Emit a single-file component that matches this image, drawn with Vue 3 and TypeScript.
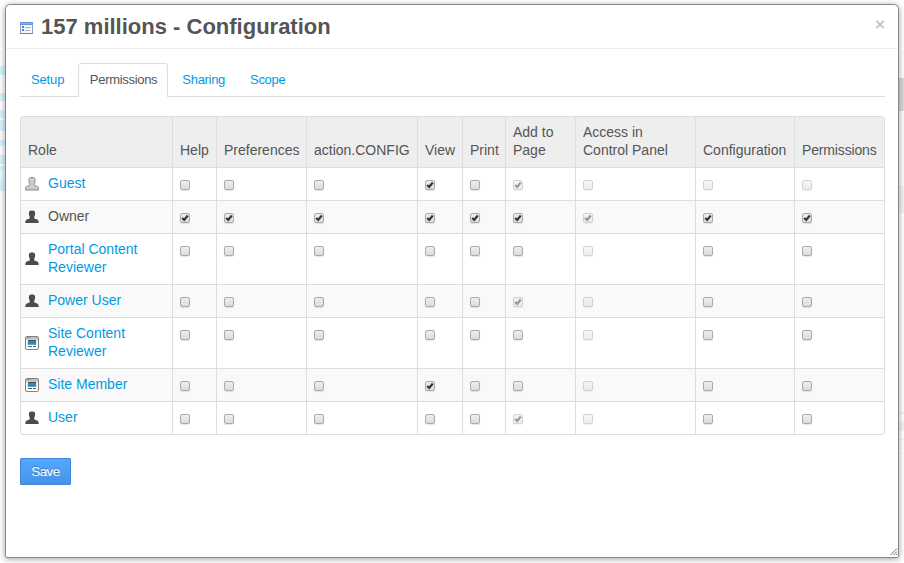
<script setup lang="ts">
import { ref } from 'vue'

type Icon = 'guest' | 'user' | 'site'
interface Role {
  name: string
  icon: Icon
  link: boolean
  // one mark per action: '-' off, 'x' on, 'd' disabled off, 'D' disabled on
  marks: string
}
interface Column {
  label: string
  width: number
}

const tabs = ['Setup', 'Permissions', 'Sharing', 'Scope']
const activeTab = ref('Permissions')

const columns: Column[] = [
  { label: 'Role', width: 152 },
  { label: 'Help', width: 44 },
  { label: 'Preferences', width: 90 },
  { label: 'action.CONFIG', width: 111 },
  { label: 'View', width: 45 },
  { label: 'Print', width: 43 },
  { label: 'Add to Page', width: 70 },
  { label: 'Access in Control Panel', width: 120 },
  { label: 'Configuration', width: 99 },
  { label: 'Permissions', width: 90 },
]

const roles = ref<Role[]>([
  { name: 'Guest', icon: 'guest', link: true, marks: '---x-Dddd' },
  { name: 'Owner', icon: 'user', link: false, marks: 'xxxxxxDxx' },
  { name: 'Portal Content Reviewer', icon: 'user', link: true, marks: '------d--' },
  { name: 'Power User', icon: 'user', link: true, marks: '-----Dd--' },
  { name: 'Site Content Reviewer', icon: 'site', link: true, marks: '------d--' },
  { name: 'Site Member', icon: 'site', link: true, marks: '---x--d--' },
  { name: 'User', icon: 'user', link: true, marks: '-----Dd--' },
])

const isOn = (m: string) => m === 'x' || m === 'D'
const isDisabled = (m: string) => m === 'd' || m === 'D'

function toggle(role: Role, i: number) {
  const m = role.marks[i]
  if (isDisabled(m)) return
  role.marks = role.marks.slice(0, i) + (m === 'x' ? '-' : 'x') + role.marks.slice(i + 1)
}
</script>

<template>
  <div class="page">
    <div class="backdrop left"></div>
    <div class="backdrop right"></div>
    <section class="dialog" role="dialog">
      <header class="head">
        <svg class="title-icon" width="13" height="12" viewBox="0 0 13 12">
          <rect x=".5" y=".5" width="12" height="11" fill="#f4f8fd" stroke="#86a3d4" />
          <rect x="0" y="0" width="13" height="3" fill="#6d93d2" />
          <rect x="1" y="1" width="11" height="1" fill="#8db1e6" />
          <path d="M2 4h2v2H2zM2 7h2v2H2z" fill="#5580c6" />
          <path d="M5 5.5h6M5 8.5h5" stroke="#b0b6bf" />
          <path d="M0 11.5h13" stroke="#6285c5" />
        </svg>
        <h1>157 millions - Configuration</h1>
        <button class="close" aria-label="Close">×</button>
      </header>
      <div class="body">
        <nav class="tabs">
          <a
            v-for="t in tabs"
            :key="t"
            class="tab"
            :class="{ active: t === activeTab }"
            @click="activeTab = t"
          >{{ t }}</a>
        </nav>
        <table class="grid">
          <colgroup>
            <col v-for="c in columns" :key="c.label" :style="{ width: c.width + 'px' }" />
          </colgroup>
          <thead>
            <tr>
              <th v-for="c in columns" :key="c.label">{{ c.label }}</th>
            </tr>
          </thead>
          <tbody>
            <tr v-for="r in roles" :key="r.name">
              <td class="role">
                <div class="role-inner">
                  <svg v-if="r.icon === 'site'" class="role-icon" width="14" height="14" viewBox="0 0 14 14">
                    <rect x=".5" y=".5" width="13" height="13" rx="1.5" fill="#fff" stroke="#85817f" />
                    <path d="M1 1h12v2H1z" fill="#c3c1bd" />
                    <path d="M2 1h2v1H2z" fill="#df7040" />
                    <path d="M4 1h2v1H4z" fill="#8faf62" />
                    <path d="M1 3.5h12" stroke="#ccc" />
                    <path d="M2 4h10v5H2z" fill="#dbe7ee" />
                    <path d="M3 4h8v5H3z" fill="#3f83af" />
                    <path d="M3 4.5h8" stroke="#28597c" />
                    <path d="M3 8.5h8" stroke="#5f9cc4" />
                    <path d="M3 10.5h4M8 10.5h3" stroke="#49616f" />
                  </svg>
                  <svg v-else class="role-icon" :class="r.icon" width="14" height="14" viewBox="0 0 14 14">
                    <path
                      d="M4.3 1.3C5 .2 9 .2 9.7 1.3c.6 1.1.5 2.9.2 3.8-.2 1-.7 1.6-.7 2.4 0 .9.4 1.2 1.5 1.4C13.2 9.3 13.7 10.4 13.7 13H.3c0-2.6.5-3.7 3-4.1C4.4 8.7 4.8 8.4 4.8 7.5c0-.8-.5-1.4-.7-2.4-.3-.9-.4-2.7.2-3.8z"
                    />
                  </svg>
                  <a v-if="r.link" class="name link">{{ r.name }}</a>
                  <span v-else class="name">{{ r.name }}</span>
                </div>
              </td>
              <td v-for="(m, i) in r.marks.split('')" :key="i">
                <span
                  class="check"
                  :class="{ disabled: isDisabled(m) }"
                  role="checkbox"
                  :aria-checked="isOn(m)"
                  @click="toggle(r, i)"
                >
                  <svg v-if="isOn(m)" width="10" height="10" viewBox="0 0 10 10">
                    <path d="M2.2 5 4.2 7 7.8 2.5" fill="none" stroke="#333" stroke-width="2.1" />
                  </svg>
                </span>
              </td>
            </tr>
          </tbody>
        </table>
        <button class="save">Save</button>
      </div>
      <svg class="grip" width="8" height="8" viewBox="0 0 8 8">
        <path d="M.5 7 7 .5M3.5 7 7 3.5M6 7 7.5 5.5" stroke="#777" fill="none" />
      </svg>
    </section>
  </div>
</template>

<style>
body {
  margin: 0;
  overflow: hidden;
}
</style>

<style scoped>
.page {
  position: relative;
  box-sizing: border-box;
  width: 904px;
  height: 563px;
  padding: 4px 5px 5px;
  overflow: hidden;
  background: #fff;
  color: #555;
  font: 14px/18px 'Liberation Sans', Arial, sans-serif;
}
.backdrop {
  position: absolute;
  top: 0;
  bottom: 0;
  width: 6px;
}
.left {
  left: 0;
  background: linear-gradient(
    #fff 66px, #d8f5ff 66px 75px, #fff 75px 93px, #d8f5ff 93px 101px,
    #fff 101px 110px, #d8f5ff 110px 118px, #fff 118px 120px, #d8f5ff 120px 131px,
    #fff 131px 140px, #d8f5ff 140px 146px, #fff 146px 155px, #d8f5ff 155px 164px,
    #fff 164px 166px, #d8f5ff 166px 170px, #eafaff 170px 180px, #d8f5ff 180px 191px, #fff 191px
  );
}
.right {
  right: 0;
  background: linear-gradient(
    #fff 78px, #dadada 78px 111px, #fdfdfd 111px 185px, #f2f2f2 185px 213px,
    #fff 213px 412px, #f4f4f4 412px 414px, #fff 414px 421px, #f4f4f0 421px 431px,
    #fff 431px 439px, #f4f4f4 439px 440px, #fff 440px 453px, #f4f4f4 453px 454px, #fff 454px
  );
}
.dialog {
  position: relative;
  box-sizing: border-box;
  width: 894px;
  height: 554px;
  border: 1px solid #888;
  border-radius: 5px 5px 2px 2px;
  background: #fff;
  box-shadow: 0 1px 6px rgba(0, 0, 0, 0.38);
}
.head {
  display: flex;
  align-items: center;
  box-sizing: border-box;
  height: 44px;
  padding: 0 13px 0 14px;
  border-bottom: 1px solid #eee;
}
.title-icon {
  flex: none;
  margin: 3px 8px 0 0;
}
h1 {
  flex: 1;
  margin: 0;
  font-size: 22px;
  line-height: 40px;
  font-weight: bold;
  white-space: nowrap;
}
.close {
  padding: 0;
  margin: -4px 0 0;
  border: 0;
  background: none;
  color: #c4c4c4;
  font: bold 17px/18px 'Liberation Sans', Arial, sans-serif;
}
.body {
  padding: 14px 13px 0 14px;
}
.tabs {
  display: flex;
  gap: 2px;
  height: 33px;
  border-bottom: 1px solid #ddd;
}
.tab {
  box-sizing: border-box;
  height: 34px;
  padding: 7px 10px 0 11px;
  border: 1px solid transparent;
  border-bottom: 0;
  border-radius: 3px 3px 0 0;
  color: #009ae5;
  font-size: 13px;
  letter-spacing: -0.3px;
  cursor: pointer;
}
.tab:first-child {
  padding: 7px 10.6px 0 10px;
  letter-spacing: -0.15px;
}
.tab.active {
  border-color: #ddd;
  background: #fff;
  color: #555;
}
.grid {
  width: 865px;
  margin-top: 19px;
  table-layout: fixed;
  border: 1px solid #ddd;
  border-left: 0;
  border-top: 0;
  border-radius: 4px;
  border-collapse: separate;
  border-spacing: 0;
  overflow: hidden;
}
th,
td {
  box-sizing: border-box;
  padding: 6px 6px 8px 7px;
  border-left: 1px solid #ddd;
  border-top: 1px solid #ddd;
  text-align: left;
  vertical-align: top;
  font-weight: normal;
}
th {
  height: 51px;
  vertical-align: bottom;
  background: #eee;
}
th:first-child {
  border-top-left-radius: 4px;
}
th:last-child {
  border-top-right-radius: 4px;
  letter-spacing: -0.15px;
}
tr:last-child td:first-child {
  border-bottom-left-radius: 4px;
}
tbody tr:nth-child(even) td {
  background: #f9f9f9;
}
.role {
  padding: 6px 20px 8px 4px;
}
.role-inner {
  display: flex;
  align-items: center;
  gap: 9px;
}
.role-icon {
  flex: none;
  margin-top: 2px;
}
.role-icon.user {
  fill: #4c4c4c;
}
.role-icon.guest {
  fill: #ccc;
  stroke: #8b8b8b;
}
.link {
  color: #009ae5;
  cursor: pointer;
}
.check {
  display: block;
  box-sizing: border-box;
  width: 10px;
  height: 10px;
  margin-top: 6px;
  border: 1px solid #aaa;
  border-radius: 2px;
  background: linear-gradient(#eee, #dcdcdc);
  box-shadow: 0 1px 1px rgba(0, 0, 0, 0.1);
}
.check svg {
  display: block;
  margin: -1px;
}
.check.disabled {
  opacity: 0.5;
}
.save {
  display: block;
  box-sizing: border-box;
  width: 51px;
  height: 27px;
  margin-top: 23px;
  padding: 0;
  border: 1px solid #3f87d8;
  border-radius: 1px;
  background: linear-gradient(#52a8ff, #4793e8);
  color: #fff;
  font: 13.5px/18px 'Liberation Sans', Arial, sans-serif;
  letter-spacing: -0.6px;
  text-shadow: 0 -1px 0 rgba(0, 0, 0, 0.25);
}
.grip {
  position: absolute;
  right: 0;
  bottom: 1px;
}
</style>
